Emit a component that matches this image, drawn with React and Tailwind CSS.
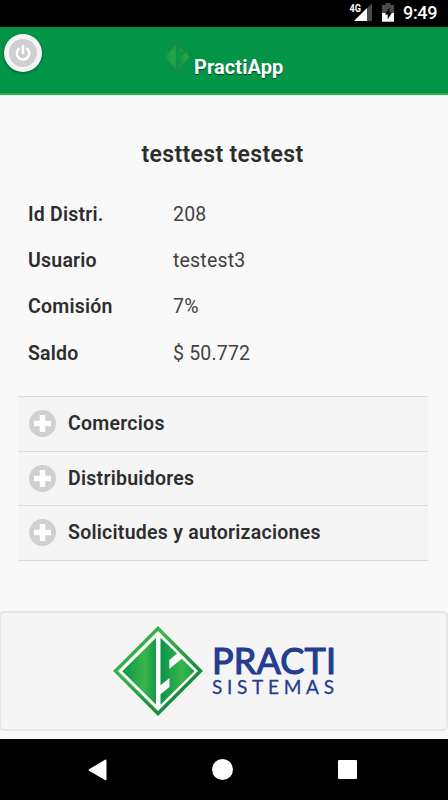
const details = [
  ['Id Distri.', '208'],
  ['Usuario', 'testest3'],
  ['Comisión', '7%'],
  ['Saldo', '$ 50.772'],
];

const sections = [
  { title: 'Comercios', row: 'h-[55px] pb-[2px]' },
  { title: 'Distribuidores', row: 'h-[54px] pb-[1px]' },
  { title: 'Solicitudes y autorizaciones', row: 'h-[55px] pb-[2px]' },
];

function StatusBar() {
  return (
    <div className="flex h-[27px] shrink-0 items-start bg-black text-white">
      <svg className="ml-[330px] h-[27px] w-[118px]" viewBox="0 0 118 27">
        <path d="M42 3.5V21H24z" fill="#4a4a4a" />
        <path d="M37 8v13H24z" fill="#fff" />
        <text x="19.5" y="11.5" fontSize="10.5" fontWeight="700" textLength="11.5" lengthAdjust="spacingAndGlyphs" fill="#fff" className="font-['Roboto',sans-serif]">4G</text>
        <path d="M52 5h3.5V3h5v2H64v8H52z" fill="#4a4a4a" />
        <path d="M52 13h12v8.700H52z" fill="#fff" />
        <path d="M59.500 7.500l-4.500 7h2.700v5l4.300-7h-2.500z" fill="#000" />
        <text x="73" y="18.500" fontSize="18" fontWeight="500" textLength="34.500" fill="#fff" className="font-['Roboto',sans-serif]">9:49</text>
      </svg>
    </div>
  );
}

function Emblem({ className }) {
  return (
    <svg className={className} viewBox="0 0 90 90">
      <defs>
        <linearGradient id="blade" x1="0" x2="1">
          <stop offset="0" stopColor="#079548" />
          <stop offset=".65" stopColor="#39b54a" />
          <stop offset="1" stopColor="#159b48" />
        </linearGradient>
        <linearGradient id="frame" x1="0" y1="0" x2="1" y2="1">
          <stop offset="0" stopColor="#0b8c43" />
          <stop offset=".3" stopColor="#43b54b" />
          <stop offset=".6" stopColor="#22973f" />
          <stop offset="1" stopColor="#087c38" />
        </linearGradient>
      </defs>
      <path d="M45 2.500L87.500 45 45 87.500 2.500 45z" fill="#fbfcfb" stroke="url(#frame)" strokeWidth="3.500" />
      <path d="M42.800 12v66.500L9.300 45.300z" fill="url(#blade)" />
      <path d="M47.500 11.700L64 27.500 56.300 34V43L68.700 32.700 81.300 45 47.500 78.500V68.300L56.500 61V52L47.500 59.300z" fill="url(#blade)" />
      <path d="M42.500 13v64.500M81 45.300L48 78" fill="none" stroke="#087b37" strokeWidth="1" opacity=".5" />
    </svg>
  );
}

function HeaderEmblem({ className }) {
  return (
    <svg className={className} viewBox="0 0 90 90">
      <defs>
        <linearGradient id="headerBlade" x1="0" x2="1">
          <stop offset="0" stopColor="#0c9542" />
          <stop offset=".7" stopColor="#27a846" />
          <stop offset="1" stopColor="#1ba045" />
        </linearGradient>
      </defs>
      <path d="M45 3L87 45 45 87 3 45z" fill="#0a9143" stroke="#1d8a42" strokeWidth="3" />
      <path d="M42.500 12v66.500L9.300 45.300z" fill="url(#headerBlade)" />
      <path d="M47.700 11.700L63.700 27.300 55.300 33.500V43.500L68.700 32.300 81.300 45 47.700 78.300V68.300L56 61.700V51.500L47.700 58.300z" fill="url(#headerBlade)" />
    </svg>
  );
}

function PowerButton() {
  return (
    <button aria-label="Salir" className="ml-1 mt-[7px] flex size-[38px] shrink-0 items-center justify-center rounded-full bg-[#f5f5f5] shadow-[0_1px_3px_#0006]">
      <span className="flex size-[28px] items-center justify-center rounded-full bg-[#cfcfcf]">
        <svg className="size-[18px]" viewBox="0 0 18 18" fill="none" stroke="white" strokeWidth="2.500">
          <path d="M5.600 4a6.300 6.300 0 1 0 6.800 0M9 1v9" />
        </svg>
      </span>
    </button>
  );
}

export default function App() {
  return (
    <div className="flex h-[800px] w-[448px] flex-col overflow-hidden bg-[#f9f9f9] font-['Roboto',sans-serif] text-[#2d2d2d]">
      <StatusBar />
      <header className="flex h-[68px] shrink-0 items-start border-b-2 border-[#27b43e] bg-[#029447]">
        <PowerButton />
        <HeaderEmblem className="ml-[119px] mt-[14px] size-[32px]" />
        <h1 className="ml-[1px] mt-[26px] text-[20px] font-bold leading-[28px] tracking-[0.080px] text-white [text-shadow:0_1px_1px_#0008]">PractiApp</h1>
      </header>

      <main className="flex h-[644px] shrink-0 flex-col">
        <h2 className="mt-[45px] pr-[3px] text-center text-[23px] font-semibold leading-[30px] tracking-[0.330px]">testtest testest</h2>
        <dl className="mt-[21px] px-7">
          {details.map(([label, value]) => (
            <div key={label} className="flex h-[46.400px] items-center text-[19.500px]">
              <dt className="w-[145px] font-semibold tracking-[0.220px]">{label}</dt>
              <dd className="tracking-[0.180px] text-[#424242]">{value}</dd>
            </div>
          ))}
        </dl>
        <div className="ml-[18px] mt-[19.600px] w-[410px] border-t border-[#dddddd] bg-[#f5f5f5]">
          {sections.map(({ title, row }) => (
            <button key={title} className={`flex w-full items-center border-b border-[#dddddd] pl-[11px] text-left ${row}`}>
              <svg className="mt-[1px] size-[27px]" viewBox="0 0 27 27">
                <circle cx="13.500" cy="13.500" r="13.500" fill="#d0d0d0" />
                <path d="M13.500 5v17M5 13.500h17" stroke="#fff" strokeWidth="5.500" />
              </svg>
              <span className="ml-[12px] text-[19.500px] font-semibold tracking-[0.260px]">{title}</span>
            </button>
          ))}
        </div>
        <footer className="-ml-px mt-auto mb-2 flex h-[120px] w-[449px] items-center rounded-[5px] border-2 border-[#e5e5e5] bg-[#f5f5f5] pl-[112px]">
          <Emblem className="size-[90px]" />
          <svg className="ml-[8px] h-[72px] w-[128px] overflow-visible" viewBox="0 -6 128 72" fill="#253d91">
            <text x="1" y="32.500" fontSize="36" fontWeight="400" textLength="124" stroke="#253d91" strokeWidth="1.200" className="font-['Lato',sans-serif]">PRACTI</text>
            <text x="1" y="53.300" fontSize="19" fontWeight="400" textLength="122" stroke="#253d91" strokeWidth=".3" className="font-['Lato',sans-serif]">SISTEMAS</text>
          </svg>
        </footer>
      </main>

      <nav className="flex h-[61px] shrink-0 items-center bg-black pl-[88px]">
        <svg className="h-[22px] w-[19px]" viewBox="0 0 19 22" fill="white">
          <path d="M1 10.300L17 .800Q18.500 0 18.500 2v18q0 2-1.500 1L1 11.700q-1-.7 0-1.400z" />
        </svg>
        <span className="ml-[105px] size-[21px] rounded-full bg-white" />
        <span className="ml-[105px] size-[19px] rounded-[1px] bg-white" />
      </nav>
    </div>
  );
}
